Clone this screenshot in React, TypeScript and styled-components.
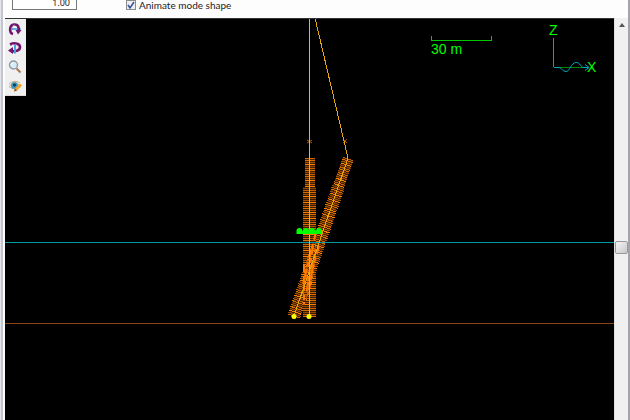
import React from "react";
import styled, { createGlobalStyle } from "styled-components";

const GlobalStyle = createGlobalStyle`
  * { box-sizing: border-box; }
  body { margin: 0; background: #fff; font-family: Lato, "Open Sans", sans-serif; }
`;

const Window = styled.main`
  height: 100vh;
  display: flex;
  flex-direction: column;
  overflow: hidden;
  background: #fdfdfd;
  border-right: 2px solid #a4a4aa;
  border-left: 1px solid #e4e5ea;
`;

const Frame = styled.div`
  flex: 1;
  min-height: 0;
  display: flex;
  flex-direction: column;
  border-left: 2px solid #c3c5d0;
  padding-left: 2px;
`;

const Options = styled.header`
  flex: none;
  height: 18px;
  display: flex;
  align-items: flex-end;
  gap: 49px;
  padding: 0 7px 8px;
`;

const AmplitudeInput = styled.input`
  width: 65px;
  height: 16px;
  padding: 0 6px;
  border: 1px solid #777;
  background: #fff;
  color: #222;
  font: 9px/14px "Noto Sans", "Open Sans", sans-serif;
  text-align: right;
`;

const CheckLabel = styled.label`
  display: flex;
  align-items: center;
  gap: 3px;
  height: 10px;
  color: #1c1c1c;
  font-size: 10px;
  line-height: 10px;
  white-space: nowrap;
`;

const CheckBox = styled.span`
  display: grid;
  width: 10px;
  height: 10px;

  & > * { grid-area: 1 / 1; }
  svg { pointer-events: none; }
`;

const CheckInput = styled.input`
  appearance: none;
  width: 10px;
  height: 10px;
  margin: 0;
  border: 1px solid #8c8c8c;
  background: #eceef2;

  &:not(:checked) + svg { visibility: hidden; }
`;

const Viewer = styled.section`
  flex: 1;
  min-height: 0;
  display: flex;
  background: #000;
`;

const Toolbar = styled.nav`
  position: absolute;
  top: 0;
  left: 0;
  width: 21px;
  display: flex;
  flex-direction: column;
  background: #f0f0f0;
  border-bottom: 1px solid #ddd;
`;

const ToolButton = styled.button`
  width: 20px;
  height: 19px;
  display: grid;
  place-items: center;
  padding: 0;
  border: 0;
  background: transparent;
`;

const Stage = styled.div`
  position: relative;
  flex: 1;
  min-width: 0;
  border-top: 1px solid #333;
`;

const Scene = styled.svg`
  display: block;
  width: 100%;
  height: 100%;
`;

const Scrollbar = styled.div`
  flex: none;
  width: 14px;
  display: grid;
  grid-template-rows: 14fr 209fr 13fr 166fr;
  background: #f0f0f0;
  border-left: 1px solid #e0e0e0;
`;

const ScrollButton = styled.button`
  display: grid;
  place-items: center;
  padding: 0;
  border: 0;
  background: transparent;
`;

const Thumb = styled.div`
  grid-row: 3;
  border: 1px solid #9a9a9e;
  border-radius: 2px;
  background: linear-gradient(135deg, #f6f6f6, #c8c8cc);
`;

type Point = [number, number];
type Bar = { x1: number; y1: number; x2: number; y2: number; color: string };

const SHADES = ["#c86000", "#904600", "#ff8000", "#a04e00", "#d87000"];

function ribs(from: Point, to: Point, startHalf: number, endHalf: number, step: number): Bar[] {
  const dx = to[0] - from[0];
  const dy = to[1] - from[1];
  const length = Math.hypot(dx, dy);
  const nx = dy / length;
  const ny = -dx / length;
  const count = Math.floor(length / step);
  return Array.from({ length: count + 1 }, (_, i) => {
    const t = i / count;
    const half = t < 0.18 ? startHalf : endHalf;
    const cx = from[0] + dx * t;
    const cy = from[1] + dy * t;
    return {
      x1: cx - nx * half,
      y1: cy - ny * half,
      x2: cx + nx * half,
      y2: cy + ny * half,
      color: SHADES[(i * 3 + (i % 7)) % SHADES.length],
    };
  });
}

const uprightRibs = ribs([309.5, 158.5], [309.5, 316.5], 5, 6.5, 2);
const leaningRibs = ribs([348, 159], [294, 316], 5.5, 6.5, 2);
const BUOYS = [299.5, 306, 312, 319];

function Ribs({ bars }: { bars: Bar[] }) {
  return (
    <g>
      {bars.map(({ color, ...line }, i) => (
        <line key={i} {...line} stroke={color} />
      ))}
    </g>
  );
}

function ModeShape() {
  return (
    <Scene viewBox="5 19 609 401" preserveAspectRatio="xMinYMin slice" role="img" aria-label="Mode shape view">
      <g fill="none" shapeRendering="crispEdges">
        <line x1="0" y1="323.5" x2="2000" y2="323.5" stroke="#8a4510" />
        <path d="M309.5 158V187" stroke="#462200" strokeWidth="10" />
        <path d="M309.5 187V317" stroke="#381b00" strokeWidth="13" />
        <path d="M348 159 294 316" stroke="#462200" strokeWidth="11" />
        <Ribs bars={uprightRibs} />
        <Ribs bars={leaningRibs} />
      </g>
      <line x1="0" y1="242.5" x2="2000" y2="242.5" stroke="#009c9c" shapeRendering="crispEdges" />
      <g fill="none" stroke="#ff7a00">
        <path d="M316 232 303 284M313 246 306 296M319 246 307 288M304 264v40M313 262l-3 24" strokeWidth="2" strokeDasharray="8 4 5 2" />
        <path d="m307 140 5 3m-5 0 5-3M343 139l4 4m0-4-4 4" stroke="#a95400" />
      </g>
      <g fill="none" shapeRendering="crispEdges">
        <path d="M309.5 18V316" stroke="#e8b81c" />
        <path d="M315 18 348 158 294 316" stroke="#e6a80c" />
      </g>
      <g fill="#0f0">
        {BUOYS.map((x) => (
          <path key={x} d={`M${x - 3} 234v-3q0-3 3-3t3 3v3z`} />
        ))}
        <path d="M297 231h25v3h-25z" />
      </g>
      <g fill="#ff0">
        <circle cx="294" cy="316.5" r="2.5" />
        <circle cx="309" cy="316.5" r="2.5" />
      </g>
      <g fill="none" stroke="#00c800" shapeRendering="crispEdges">
        <path d="M431.5 36v4.5h60V36M553.5 38v29" />
        <path d="M554 67.5h33" stroke="#008a00" />
      </g>
      <path d="M554 67.5h5c3 0 3 4 7 4s5-9 10-9 4 5 8 5h5m-4-3 4 3-4 3" fill="none" stroke="#00a8b8" />
      <g fill="#00ff00" fontFamily='"Liberation Sans", Arial, sans-serif' fontSize="14">
        <text x="431" y="54">30 m</text>
        <text x="549" y="35">Z</text>
        <text x="587" y="72">X</text>
      </g>
    </Scene>
  );
}

const ICON = { width: 14, height: 14, viewBox: "0 0 14 14", fill: "none", "aria-hidden": true } as const;

const RotateHorizontalIcon = () => (
  <svg {...ICON}>
    <path d="M1 7h12" stroke="#55ace0" strokeWidth="1.5" />
    <path d="M5 12C1 11 1 3 6 2.500c5-.5 5 4 4.500 7" stroke="#70146e" strokeWidth="2.600" />
    <path d="M4 8C3.500 5 5 3 7 3" stroke="#b887b8" />
    <path d="M7.500 8h6L10 12.500z" fill="#70146e" />
    <path d="M3.500 7h5" stroke="#55ace0" strokeWidth="1.500" />
  </svg>
);

const RotateVerticalIcon = () => (
  <svg {...ICON}>
    <path d="M2 3.500C7 1 12.500 3 12 6.500s-5 4-8 3.500" stroke="#70146e" strokeWidth="2.600" />
    <path d="M0 9.500 5 6v7z" fill="#70146e" />
    <path d="M7 3v9.500" stroke="#4aa5dc" strokeWidth="2" />
    <path d="M4 3.500q5-1 7 2" stroke="#a568a5" />
  </svg>
);

const ZoomIcon = () => (
  <svg {...ICON}>
    <path d="m8.500 8.500 4 4" stroke="#a87850" strokeWidth="2" />
    <circle cx="5.500" cy="5" r="4" fill="#d6ecf8" stroke="#8a959e" strokeWidth="1.300" />
    <path d="M3 5q0-2 2.500-2.500" stroke="#fff" />
  </svg>
);

const EyeIcon = () => (
  <svg {...ICON}>
    <path d="M1 7.500q5.500-6 12 0-6 5-12 0" fill="#f6efdf" stroke="#cdb283" />
    <path d="M1 5q5-5 11-1" stroke="#d5ad78" />
    <circle cx="6.500" cy="6.500" r="3.500" fill="#3d98c2" />
    <circle cx="6.500" cy="6" r="1.500" fill="#143444" />
    <path d="m6 12.500 1-3L12 4.500l2 2-5 5z" fill="#f2a52c" />
    <path d="m6 12.500 1-3 2 2z" fill="#80512b" />
  </svg>
);

const TOOLS = [
  { label: "Rotate about horizontal axis", Icon: RotateHorizontalIcon },
  { label: "Rotate about vertical axis", Icon: RotateVerticalIcon },
  { label: "Zoom", Icon: ZoomIcon },
  { label: "Edit view", Icon: EyeIcon },
];

export default function App() {
  return (
    <Window>
      <GlobalStyle />
      <Frame>
        <Options>
          <AmplitudeInput aria-label="Amplitude" defaultValue="1.00" />
          <CheckLabel>
            <CheckBox>
              <CheckInput type="checkbox" defaultChecked />
              <svg width="10" height="10" viewBox="0 0 10 10" fill="none" aria-hidden="true">
                <path d="m2 5 2 3 4-6" stroke="#34509c" strokeWidth="1.500" />
              </svg>
            </CheckBox>
            Animate mode shape
          </CheckLabel>
        </Options>
        <Viewer>
          <Stage>
            <ModeShape />
            <Toolbar aria-label="View tools">
              {TOOLS.map(({ label, Icon }) => (
                <ToolButton key={label} type="button" aria-label={label}>
                  <Icon />
                </ToolButton>
              ))}
            </Toolbar>
          </Stage>
          <Scrollbar>
            <ScrollButton type="button" aria-label="Scroll up">
              <svg width="6" height="4" viewBox="0 0 6 4" aria-hidden="true">
                <path d="M0 4 3 0l3 4z" fill="#555" />
              </svg>
            </ScrollButton>
            <Thumb />
          </Scrollbar>
        </Viewer>
      </Frame>
    </Window>
  );
}
